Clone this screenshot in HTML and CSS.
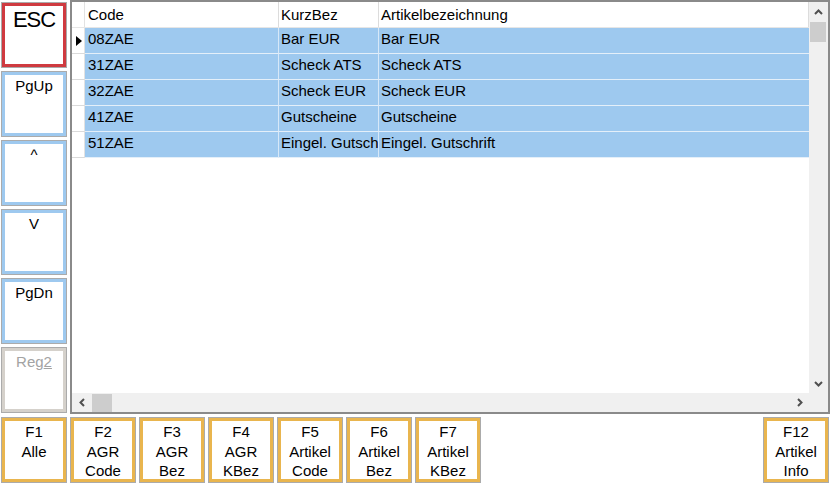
FILE: index.html
```html
<!DOCTYPE html>
<html>
<head>
<meta charset="utf-8">
<link rel="stylesheet" href="styles.css">
</head>
<body>
<div class="top">
  <div class="side">
    <div class="btn red"><span class="big">ESC</span></div>
    <div class="btn blue">PgUp</div>
    <div class="btn blue">^</div>
    <div class="btn blue">V</div>
    <div class="btn blue">PgDn</div>
    <div class="btn gray">Reg<u>2</u></div>
  </div>
  <div class="grid">
    <div class="gbody">
      <div class="content">
        <div class="row head">
          <div class="rh"></div>
          <div class="c c1">Code</div>
          <div class="c c2">KurzBez</div>
          <div class="c c3">Artikelbezeichnung</div>
        </div>
        <div class="row data">
          <div class="rh"><svg class="cur" width="6" height="10" viewBox="0 0 6 10"><polygon points="0,0 6,5 0,10" fill="#000"/></svg></div>
          <div class="c c1">08ZAE</div>
          <div class="c c2">Bar EUR</div>
          <div class="c c3">Bar EUR</div>
        </div>
        <div class="row data">
          <div class="rh"></div>
          <div class="c c1">31ZAE</div>
          <div class="c c2">Scheck ATS</div>
          <div class="c c3">Scheck ATS</div>
        </div>
        <div class="row data">
          <div class="rh"></div>
          <div class="c c1">32ZAE</div>
          <div class="c c2">Scheck EUR</div>
          <div class="c c3">Scheck EUR</div>
        </div>
        <div class="row data">
          <div class="rh"></div>
          <div class="c c1">41ZAE</div>
          <div class="c c2">Gutscheine</div>
          <div class="c c3">Gutscheine</div>
        </div>
        <div class="row data">
          <div class="rh"></div>
          <div class="c c1">51ZAE</div>
          <div class="c c2">Eingel. Gutschrift</div>
          <div class="c c3">Eingel. Gutschrift</div>
        </div>
      </div>
      <div class="vscroll">
        <div class="arrow"><svg width="9" height="6" viewBox="0 0 9 6"><path d="M1 5 L4.5 1.5 L8 5" fill="none" stroke="#505050" stroke-width="2"/></svg></div>
        <div class="vthumb"></div>
        <div class="fill"></div>
        <div class="arrow"><svg width="9" height="6" viewBox="0 0 9 6"><path d="M1 1 L4.5 4.5 L8 1" fill="none" stroke="#505050" stroke-width="2"/></svg></div>
      </div>
    </div>
    <div class="hbar">
      <div class="hscroll">
        <div class="arrow"><svg width="6" height="9" viewBox="0 0 6 9"><path d="M5 1 L1.5 4.5 L5 8" fill="none" stroke="#505050" stroke-width="2"/></svg></div>
        <div class="hthumb"></div>
        <div class="fill"></div>
        <div class="arrow"><svg width="6" height="9" viewBox="0 0 6 9"><path d="M1 1 L4.5 4.5 L1 8" fill="none" stroke="#505050" stroke-width="2"/></svg></div>
      </div>
      <div class="corner"></div>
    </div>
  </div>
</div>
<div class="fbar">
  <div class="btn orange fk">F1<br>Alle</div>
  <div class="btn orange fk">F2<br>AGR<br>Code</div>
  <div class="btn orange fk">F3<br>AGR<br>Bez</div>
  <div class="btn orange fk">F4<br>AGR<br>KBez</div>
  <div class="btn orange fk">F5<br>Artikel<br>Code</div>
  <div class="btn orange fk">F6<br>Artikel<br>Bez</div>
  <div class="btn orange fk">F7<br>Artikel<br>KBez</div>
  <div class="btn orange fk right">F12<br>Artikel<br>Info</div>
</div>
</body>
</html>
```

FILE: styles.css
```css
html, body {
  margin: 0;
  padding: 0;
  background: #ffffff;
}
body {
  width: 835px;
  height: 488px;
  overflow: hidden;
  font-family: "Liberation Sans", Arial, sans-serif;
  font-size: 15px;
  color: #000;
}
.top {
  display: flex;
  height: 414px;
}
.side {
  width: 70px;
  flex: none;
  box-sizing: border-box;
  padding: 2px 0 0 1px;
  display: flex;
  flex-direction: column;
  gap: 3px;
}
.btn {
  box-sizing: border-box;
  width: 66px;
  height: 66px;
  flex: none;
  border: 1px solid #ababab;
  background: #fff;
  text-align: center;
  padding-top: 5px;
  line-height: 18px;
}
.red { box-shadow: inset 0 0 0 3px #cf3a40; }
.blue { box-shadow: inset 0 0 0 3px #9ec9ef; }
.gray { box-shadow: inset 0 0 0 3px #d5d1cb; color: #a3a3a3; }
.orange { box-shadow: inset 0 0 0 3px #e9b54e; }
.big {
  font-size: 22px;
  line-height: 24px;
  letter-spacing: -1px;
}
.grid {
  width: 760px;
  height: 414px;
  box-sizing: border-box;
  border: 2px solid #8a8a8a;
  display: flex;
  flex-direction: column;
  flex: none;
}
.gbody {
  display: flex;
  height: 391px;
}
.content {
  width: 737px;
  overflow: hidden;
  background: #fff;
}
.row {
  display: flex;
  box-sizing: border-box;
}
.row.head {
  height: 26px;
  border-bottom: 1px solid #e6e6e6;
}
.row.head .c {
  padding-top: 2px;
  border-right: 1px solid #dcdcdc;
}
.row.data {
  height: 26px;
}
.rh {
  width: 13px;
  flex: none;
  box-sizing: border-box;
  border-right: 1px solid #e2e2e2;
  border-bottom: 1px solid #dadada;
}
.row.head .rh { border-bottom: none; }
.cur {
  display: block;
  margin: 8px 0 0 4px;
}
.c {
  box-sizing: border-box;
  white-space: nowrap;
  overflow: hidden;
  line-height: 22px;
  padding-left: 2px;
}
.c1 { width: 194px; padding-left: 3px; }
.c2 { width: 100px; }
.c3 { flex: 1; }
.row.data .c {
  background: #9ec9ef;
  border-right: 1px solid #d7e8f8;
  border-bottom: 1px solid #e4eff9;
}
.row.data .c3 { border-right: none; }
.vscroll {
  width: 19px;
  background: #f0f0f0;
  display: flex;
  flex-direction: column;
}
.arrow {
  width: 19px;
  height: 19px;
  flex: none;
  display: flex;
  align-items: center;
  justify-content: center;
}
.arrow svg { display: block; }
.vthumb {
  height: 20px;
  flex: none;
  margin: 1px 2px 0 1px;
  background: #cdcdcd;
}
.fill { flex: 1; }
.hbar {
  display: flex;
  height: 19px;
}
.hscroll {
  width: 737px;
  background: #f0f0f0;
  display: flex;
}
.hthumb {
  width: 20px;
  flex: none;
  margin: 1px 0 0 1px;
  background: #cdcdcd;
}
.corner {
  width: 19px;
  background: #f0f0f0;
}
.fbar {
  display: flex;
  gap: 3px;
  padding: 3px 6px 0 1px;
}
.fk {
  padding-top: 4px;
  line-height: 19.5px;
}
.right { margin-left: auto; }
```
